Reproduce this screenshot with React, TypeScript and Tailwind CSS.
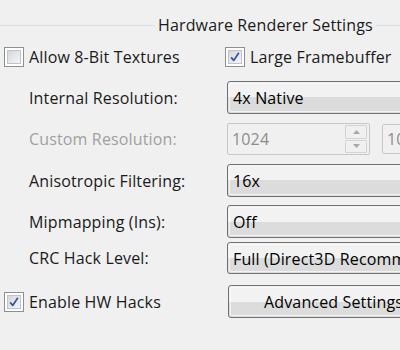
import React from 'react';

const Check = ({ checked }: { checked: boolean }) => (
  <div className="w-[20px] h-[20px] shrink-0 border border-[#8e8f8f] bg-white p-[2px]">
    <div className="relative w-full h-full border border-[#c0c4c9] bg-gradient-to-br from-[#d4d7dc] to-[#f6f6f6]">
      {checked && (
        <svg viewBox="0 0 14 14" className="absolute inset-0 w-full h-full">
          <path d="M2.5 7.5 L5.5 11 L11.5 2" fill="none" stroke="#3a55a0" strokeWidth="2" strokeLinejoin="round" />
        </svg>
      )}
    </div>
  </div>
);

const Combo = ({ text }: { text: string }) => (
  <div className="w-[200px] h-full shrink-0 rounded-[3px] border border-[#707070] bg-gradient-to-b from-[#f2f2f2] from-50% to-[#dcdcdc] to-50% p-px">
    <div className="h-full rounded-[2px] border border-[#fbfbfb]/70 flex items-center pl-[3px] pt-px text-black whitespace-nowrap">{text}</div>
  </div>
);

const SpinBox = ({ text, w }: { text: string; w: number }) => (
  <div className="h-full shrink-0 rounded-[2px] border border-[#c6c8cb] flex items-center bg-[#f0f0f0]" style={{ width: w }}>
    <span className="pl-[4px] text-[#8d8d8d] flex-1">{text}</span>
    <div className="flex flex-col gap-[1px] mr-[2px] w-[22px] h-[28px]">
      <div className="flex-1 border border-[#d2d4d6] rounded-[1px] flex items-center justify-center">
        <svg width="7" height="4" viewBox="0 0 7 4"><path d="M0 4 L3.5 0 L7 4 Z" fill="#a8a8a8" /></svg>
      </div>
      <div className="flex-1 border border-[#d2d4d6] rounded-[1px] flex items-center justify-center">
        <svg width="7" height="4" viewBox="0 0 7 4"><path d="M0 0 L3.5 4 L7 0 Z" fill="#a8a8a8" /></svg>
      </div>
    </div>
  </div>
);

const Label = ({ text, off }: { text: string; off?: boolean }) => (
  <div className={`w-[227px] shrink-0 pl-[29px] whitespace-nowrap ${off ? 'text-[#a0a0a0]' : 'text-[#1a1a1a]'}`}>{text}</div>
);

export default function App() {
  return (
    <div
      className="w-[400px] h-[350px] overflow-hidden bg-[#f0f0f0] text-[16px] leading-[20px] tracking-[0.15px] text-[#1a1a1a]"
      style={{ fontFamily: '"Open Sans", "Noto Sans", sans-serif' }}
    >
      {/* group title */}
      <div className="mt-[15px] h-[20px] flex items-center">
        <div className="w-[155px] h-px bg-[#d5dfe5] shrink-0" />
        <div className="px-[3px] whitespace-nowrap">Hardware Renderer Settings</div>
        <div className="flex-1 h-px bg-[#d5dfe5]" />
      </div>

      <div className="mt-[12px] h-[20px] flex items-center">
        <div className="w-[225px] shrink-0 flex items-center pl-[4px] gap-[5px]">
          <Check checked={false} />
          <span>Allow 8-Bit Textures</span>
        </div>
        <div className="flex items-center gap-[5px] whitespace-nowrap">
          <Check checked />
          <span>Large Framebuffer</span>
        </div>
      </div>

      <div className="mt-[14px] h-[33px] flex items-center">
        <Label text="Internal Resolution:" />
        <Combo text="4x Native" />
      </div>

      <div className="mt-[9px] h-[32px] flex items-center">
        <Label text="Custom Resolution:" off />
        <SpinBox text="1024" w={143} />
        <div className="ml-[12px] shrink-0">
          <SpinBox text="1024" w={143} />
        </div>
      </div>

      <div className="mt-[9px] h-[33px] flex items-center">
        <Label text="Anisotropic Filtering:" />
        <Combo text="16x" />
      </div>

      <div className="mt-[8px] h-[33px] flex items-center">
        <Label text="Mipmapping (Ins):" />
        <Combo text="Off" />
      </div>

      <div className="mt-[4px] h-[32px] flex items-center">
        <Label text="CRC Hack Level:" />
        <Combo text="Full (Direct3D Recommended)" />
      </div>

      <div className="mt-[11px] h-[33px] flex items-center">
        <div className="w-[228px] shrink-0 flex items-center pl-[4px] gap-[5px] whitespace-nowrap">
          <Check checked />
          <span>Enable HW Hacks</span>
        </div>
        <div className="w-[240px] h-full shrink-0 rounded-[3px] border border-[#707070] bg-gradient-to-b from-[#f2f2f2] from-50% to-[#dcdcdc] to-50% p-px">
          <div className="h-full rounded-[2px] border border-[#fbfbfb]/70 flex items-center pl-[33px] pt-px text-black whitespace-nowrap">Advanced Settings</div>
        </div>
      </div>
    </div>
  );
}
